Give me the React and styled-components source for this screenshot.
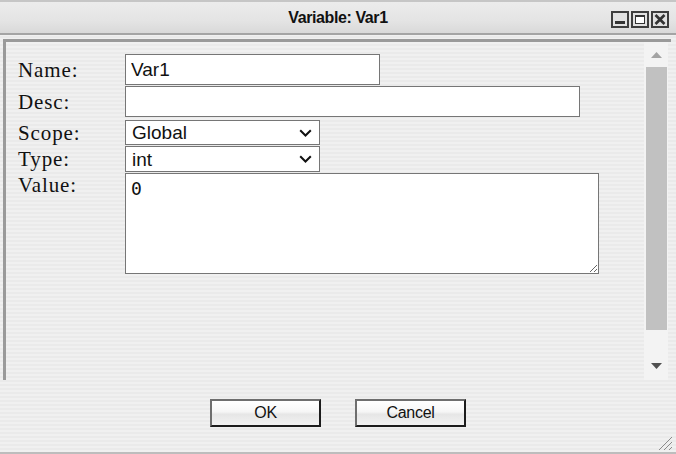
import React from 'react';
import styled, { createGlobalStyle } from 'styled-components';

const Global = createGlobalStyle`
    html, body { margin: 0; padding: 0; }
    body { background: #efefef; font-family: "Liberation Sans", Arial, sans-serif; }
`;

const Window = styled.div`
    position: relative;
    width: 676px;
    height: 454px;
    box-sizing: border-box;
    display: flex;
    flex-direction: column;
    border-top: 2px solid #c6c6c6;
    border-bottom: 2px solid #bdbdbd;
    background: repeating-linear-gradient(180deg, #f0f0f0 0 2px, #eaeaea 2px 4px);
    overflow: hidden;
`;
const TitleBar = styled.div`
    height: 31px;
    flex: none;
    display: grid;
    grid-template-columns: 1fr auto 1fr;
    align-items: center;
    background: linear-gradient(180deg, #ececec 0%, #e4e4e4 60%, #d9d9d9 100%);
    border-bottom: 2px solid #a4a4a4;
`;
const Title = styled.div`
    grid-column: 2;
    font-weight: bold;
    font-size: 16px;
    color: #111;
    letter-spacing: -0.4px;
`;
const Controls = styled.div`
    justify-self: end;
    display: flex;
    gap: 2px;
    margin-right: 7px;
    margin-top: 4px;
`;
const Panel = styled.div`
    margin: 4px 5px 0 3px;
    height: 341px;
    box-sizing: border-box;
    border-top: 3px solid #9a9a9a;
    border-left: 3px solid #9a9a9a;
    display: flex;
    flex: none;
`;
const Form = styled.div`
    flex: 1;
    padding: 12px 0 0 12px;
    display: grid;
    grid-template-columns: 107px auto;
    grid-template-rows: 31px 31px 27px 26px 101px;
    row-gap: 1px;
    align-content: start;
    justify-items: start;
`;
const Label = styled.label`
    font-family: "Liberation Serif", "Times New Roman", serif;
    font-size: 21px;
    letter-spacing: 0.9px;
    line-height: 22px;
    color: #111;
    align-self: ${p => (p.top ? 'start' : 'center')};
    margin-top: ${p => (p.top ? '1px' : p.gap ? '2px' : '0')};
`;
const TextInput = styled.input`
    width: ${p => p.w}px;
    height: 31px;
    box-sizing: border-box;
    border: 1px solid #767676;
    border-radius: 0;
    padding: 0 5px;
    font-family: "Liberation Sans", Arial, sans-serif;
    font-size: 19px;
    color: #111;
    background: #fff;
    outline: 0;
`;
const SelectBox = styled.div`
    position: relative;
    width: 195px;
    height: ${p => p.h}px;
    margin-top: ${p => (p.gap ? '2px' : '0')};
`;
const Select = styled.select`
    appearance: none;
    width: 100%;
    height: 100%;
    box-sizing: border-box;
    border: 1px solid #767676;
    border-radius: 0;
    padding: 0 6px;
    font-family: "Liberation Sans", Arial, sans-serif;
    font-size: 19px;
    color: #111;
    background: #fff;
    outline: 0;
`;
const Chevron = styled.svg`
    position: absolute;
    right: 8px;
    top: 50%;
    margin-top: -4px;
    pointer-events: none;
`;
const TextArea = styled.textarea`
    width: 474px;
    height: 101px;
    box-sizing: border-box;
    border: 1px solid #767676;
    border-radius: 0;
    padding: 5px 5px;
    font-family: "DejaVu Sans Mono", "Liberation Mono", monospace;
    font-size: 18px;
    line-height: 20px;
    color: #111;
    background: #fff;
    outline: 0;
`;
const Scrollbar = styled.div`
    width: 24px;
    margin-right: 3px;
    background: #f3f3f3;
    display: flex;
    flex-direction: column;
    align-items: center;
`;
const ArrowButton = styled.div`
    height: ${p => p.h}px;
    display: flex;
    align-items: center;
    justify-content: center;
    flex: none;
`;
const Thumb = styled.div`
    width: 21px;
    height: 263px;
    margin-left: 1px;
    background: #c1c1c1;
    flex: none;
`;
const Spacer = styled.div`
    flex: 1;
`;
const Footer = styled.div`
    display: flex;
    justify-content: center;
    gap: 34px;
    padding-top: 19px;
`;
const Button = styled.button`
    width: 111px;
    height: 28px;
    box-sizing: border-box;
    border-style: solid;
    border-width: 2px;
    border-color: #6e6e6e #1c1c1c #1c1c1c #6e6e6e;
    background: linear-gradient(180deg, #ffffff 0%, #f6f6f6 45%, #e6e6e6 55%, #f2f2f2 100%);
    font-family: "Liberation Sans", Arial, sans-serif;
    font-size: 16px;
    letter-spacing: -0.3px;
    color: #111;
    padding: 0;
`;
const Grip = styled.svg`
    position: absolute;
    right: 3px;
    bottom: 1px;
`;

const WinButton = ({ kind }) => (
    <svg width="18" height="17" viewBox="0 0 18 17">
        <rect x="1" y="1" width="16" height="15" fill="#e2e2e2" stroke="#3e3e3e" strokeWidth="2" />
        {kind === 'min' && <rect x="4" y="10" width="10" height="3" fill="#333" />}
        {kind === 'max' && (
            <g>
                <rect x="4.5" y="4.5" width="9" height="8" fill="#fff" stroke="#333" strokeWidth="1" />
                <rect x="4" y="4" width="10" height="2" fill="#333" />
            </g>
        )}
        {kind === 'close' && (
            <g stroke="#333" strokeWidth="2.6">
                <line x1="4.5" y1="4" x2="13.5" y2="13" />
                <line x1="13.5" y1="4" x2="4.5" y2="13" />
            </g>
        )}
    </svg>
);

const Dropdown = ({ h, gap, value, options }) => (
    <SelectBox h={h} gap={gap}>
        <Select defaultValue={value}>
            {options.map(o => <option key={o}>{o}</option>)}
        </Select>
        <Chevron width="13" height="8" viewBox="0 0 13 8">
            <path d="M1.2 1.2 L6.5 6.5 L11.8 1.2" fill="none" stroke="#111" strokeWidth="2" />
        </Chevron>
    </SelectBox>
);

export default function App() {
    return (
        <Window>
            <Global />
            <TitleBar>
                <Title>Variable: Var1</Title>
                <Controls>
                    <WinButton kind="min" />
                    <WinButton kind="max" />
                    <WinButton kind="close" />
                </Controls>
            </TitleBar>
            <Panel>
                <Form>
                    <Label>Name:</Label>
                    <TextInput w={255} defaultValue="Var1" />
                    <Label>Desc:</Label>
                    <TextInput w={455} defaultValue="" />
                    <Label gap>Scope:</Label>
                    <Dropdown h={25} gap value="Global" options={['Global', 'Local']} />
                    <Label>Type:</Label>
                    <Dropdown h={26} value="int" options={['int', 'float', 'string']} />
                    <Label top>Value:</Label>
                    <TextArea defaultValue="0" />
                </Form>
                <Scrollbar>
                    <ArrowButton h={25}>
                        <svg width="11" height="6" viewBox="0 0 11 6"><path d="M0 6 L5.5 0 L11 6 Z" fill="#a3a3a3" /></svg>
                    </ArrowButton>
                    <Thumb />
                    <Spacer />
                    <ArrowButton h={28}>
                        <svg width="11" height="6" viewBox="0 0 11 6"><path d="M0 0 L11 0 L5.5 6 Z" fill="#505050" /></svg>
                    </ArrowButton>
                </Scrollbar>
            </Panel>
            <Footer>
                <Button>OK</Button>
                <Button>Cancel</Button>
            </Footer>
            <Grip width="17" height="17" viewBox="0 0 17 17">
                <g stroke="#8a8a8a" strokeWidth="1">
                    <line x1="16" y1="3" x2="3" y2="16" />
                    <line x1="16" y1="8" x2="8" y2="16" />
                    <line x1="16" y1="13" x2="13" y2="16" />
                </g>
            </Grip>
        </Window>
    );
}
